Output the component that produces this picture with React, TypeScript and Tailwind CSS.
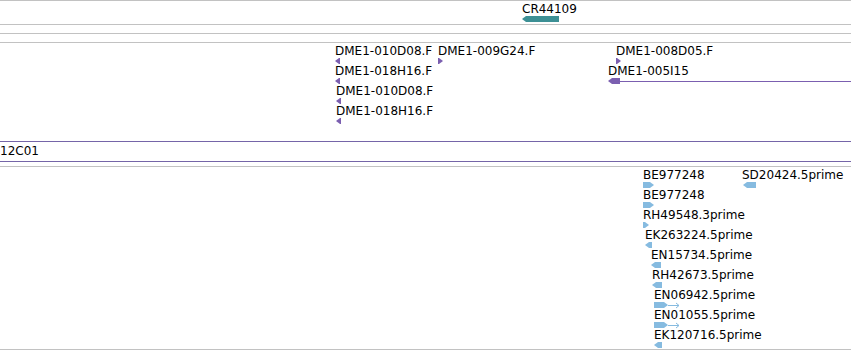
import type { ReactNode } from 'react';

type Dir = 'left' | 'right';

type Feature = {
  label: string;
  x: number;
  row: number;
  shift?: number;
  w: number;
  dir: Dir;
  tail?: number;
};

function Arrow({ w, dir, color, tail = 0 }: { w: number; dir: Dir; color: string; tail?: number }) {
  const tip = Math.min(4, w);
  const body =
    dir === 'right'
      ? `0,0 ${w - tip},0 ${w},3 ${w - tip},6 0,6`
      : `${tip},0 ${w},0 ${w},6 ${tip},6 0,3`;
  const total = w + tail;
  return (
    <svg width={total} height={6} viewBox={`0 0 ${total} 6`} className="block overflow-visible">
      <polygon points={body} fill={color} />
      {tail > 0 && (
        <>
          <rect x={w} y={3} width={tail} height={1} fill={color} />
          <polyline points={`${total - 3},1 ${total},3.5 ${total - 3},6`} fill="none" stroke={color} strokeWidth={1} />
        </>
      )}
    </svg>
  );
}

// a feature sits at its genomic x; label on top, glyph underneath. rows are 20px apart
function Glyph({ f, color, offset = 2 }: { f: Feature; color: string; offset?: number }) {
  return (
    <div className="absolute flex flex-col gap-px" style={{ left: f.x, top: f.row * 20 + offset }}>
      <div className="whitespace-nowrap leading-[12px]">{f.label}</div>
      <div style={{ marginLeft: f.shift ?? 0 }}>
        <Arrow w={f.w} dir={f.dir} color={color} tail={f.tail} />
      </div>
    </div>
  );
}

function Track({ h, children }: { h: string; children?: ReactNode }) {
  return <div className={`relative border-t border-[#c2c2c2] ${h}`}>{children}</div>;
}

const dmeFeatures: Feature[] = [
  { label: 'DME1-010D08.F', x: 335, row: 0, w: 5, dir: 'left' },
  { label: 'DME1-009G24.F', x: 438, row: 0, w: 5, dir: 'right' },
  { label: 'DME1-018H16.F', x: 335, row: 1, w: 5, dir: 'left' },
  { label: 'DME1-010D08.F', x: 336, row: 2, w: 5, dir: 'left' },
  { label: 'DME1-018H16.F', x: 336, row: 3, w: 5, dir: 'left' },
  { label: 'DME1-008D05.F', x: 616, row: 0, w: 5, dir: 'right' },
];

const estFeatures: Feature[] = [
  { label: 'BE977248', x: 643, row: 0, w: 11, dir: 'right' },
  { label: 'SD20424.5prime', x: 742, row: 0, shift: 1, w: 13, dir: 'left' },
  { label: 'BE977248', x: 643, row: 1, w: 11, dir: 'right' },
  { label: 'RH49548.3prime', x: 643, row: 2, w: 6, dir: 'right' },
  { label: 'EK263224.5prime', x: 645, row: 3, w: 7, dir: 'left' },
  { label: 'EN15734.5prime', x: 651, row: 4, w: 10, dir: 'left' },
  { label: 'RH42673.5prime', x: 652, row: 5, w: 10, dir: 'left' },
  { label: 'EN06942.5prime', x: 654, row: 6, w: 14, dir: 'right', tail: 11 },
  { label: 'EN01055.5prime', x: 654, row: 7, w: 14, dir: 'right', tail: 11 },
  { label: 'EK120716.5prime', x: 654, row: 8, w: 8, dir: 'left' },
];

export default function App() {
  return (
    <div className="w-[851px] h-[350px] overflow-hidden bg-white text-[12px] text-black font-['DejaVu_Sans',sans-serif]">
      <Track h="h-[24px]">
        <Glyph f={{ label: 'CR44109', x: 522, row: 0, w: 37, dir: 'left' }} color="#3d9095" />
      </Track>
      <Track h="h-[9px]" />
      <Track h="h-[9px]" />

      <Track h="h-[99px]">
        {dmeFeatures.map((f, i) => (
          <Glyph key={i} f={f} color="#7b5fb0" />
        ))}
        <div className="absolute left-[608px] right-0 top-[22px] flex flex-col gap-px">
          <div className="whitespace-nowrap leading-[12px]">DME1-005I15</div>
          <div className="flex items-center h-[6px]">
            <Arrow w={12} dir="left" color="#7b5fb0" />
            <div className="flex-1 h-px bg-[#7b5fb0]" />
          </div>
        </div>
      </Track>

      <div className="h-[21px] border-y border-[#7565a8] pt-[3px] leading-[12px] whitespace-nowrap">12C01</div>
      <div className="h-[4px]" />

      <div className="relative h-[184px] border-y border-[#c2c2c2]">
        {estFeatures.map((f, i) => (
          <Glyph key={i} f={f} color="#86bbe0" />
        ))}
      </div>
    </div>
  );
}
